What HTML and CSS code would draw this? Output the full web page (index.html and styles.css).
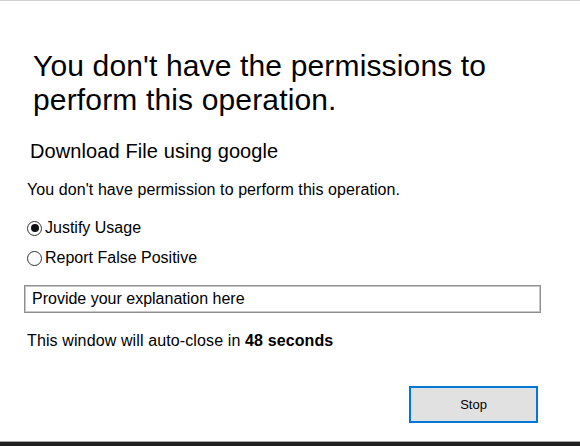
FILE: index.html
```html
<!DOCTYPE html>
<html>
<head>
<meta charset="utf-8">
<link rel="stylesheet" href="styles.css">
</head>
<body>
<div class="window">
  <div class="content">
    <h1 class="title">You don't have the permissions to perform this operation.</h1>
    <h2 class="subtitle">Download File using google</h2>
    <p class="msg">You don't have permission to perform this operation.</p>
    <label class="radio first"><span class="dot checked"></span>Justify Usage</label>
    <label class="radio second"><span class="dot"></span>Report False Positive</label>
    <div class="input">Provide your explanation here</div>
    <p class="timer">This window will auto-close in <b>48 seconds</b></p>
    <div class="actions"><button class="btn">Stop</button></div>
  </div>
  <div class="taskbar"></div>
</div>
</body>
</html>
```

FILE: styles.css
```css
html, body {
  margin: 0;
  padding: 0;
  background: #ffffff;
}
.window {
  width: 580px;
  height: 446px;
  box-sizing: border-box;
  border-top: 1px solid #d2d2d2;
  display: flex;
  flex-direction: column;
  font-family: "Liberation Sans", Arial, sans-serif;
  color: #000;
}
.content {
  flex: 1;
  padding: 0 40px 0 27px;
  display: flex;
  flex-direction: column;
}
.title {
  margin: 48px 0 0 6px;
  font-size: 30px;
  line-height: 34px;
  font-weight: normal;
  letter-spacing: 0.15px;
  width: 510px;
}
.subtitle {
  margin: 22px 0 0 3px;
  font-size: 20px;
  line-height: 24px;
  font-weight: normal;
  letter-spacing: 0.1px;
}
.msg {
  margin: 17px 0 0 0;
  font-size: 16px;
  line-height: 20px;
  letter-spacing: 0.08px;
}
.radio {
  display: flex;
  align-items: center;
  font-size: 16px;
  line-height: 20px;
}
.radio.first {
  margin-top: 18px;
}
.radio.second {
  margin-top: 10px;
}
.dot {
  width: 13px;
  height: 13px;
  border: 1.5px solid #333;
  border-radius: 50%;
  margin-right: 3px;
  box-sizing: content-box;
  position: relative;
  display: inline-block;
}
.dot.checked::after {
  content: "";
  position: absolute;
  left: 2.5px;
  top: 2.5px;
  width: 8px;
  height: 8px;
  border-radius: 50%;
  background: #111;
}
.input {
  margin: 17px 0 0 -3px;
  width: 517px;
  height: 28px;
  border: 1px solid #8e8e8e;
  box-shadow: inset 0 0 0 1px #c8c8c8;
  box-sizing: border-box;
  font-size: 16px;
  line-height: 25px;
  padding-left: 7px;
}
.timer {
  margin: 18px 0 0 0;
  font-size: 16px;
  line-height: 20px;
  letter-spacing: 0.12px;
}
.actions {
  display: flex;
  justify-content: flex-end;
  margin-top: 35px;
}
.btn {
  width: 129px;
  height: 37px;
  margin-right: 2px;
  background: #e1e1e1;
  border: 2px solid #0078d7;
  font-family: "Liberation Sans", Arial, sans-serif;
  font-size: 13px;
  color: #000;
  padding: 0;
}
.taskbar {
  height: 4px;
  border-top: 1px solid #a8a8a8;
  background: #1f1f1f;
}
```
